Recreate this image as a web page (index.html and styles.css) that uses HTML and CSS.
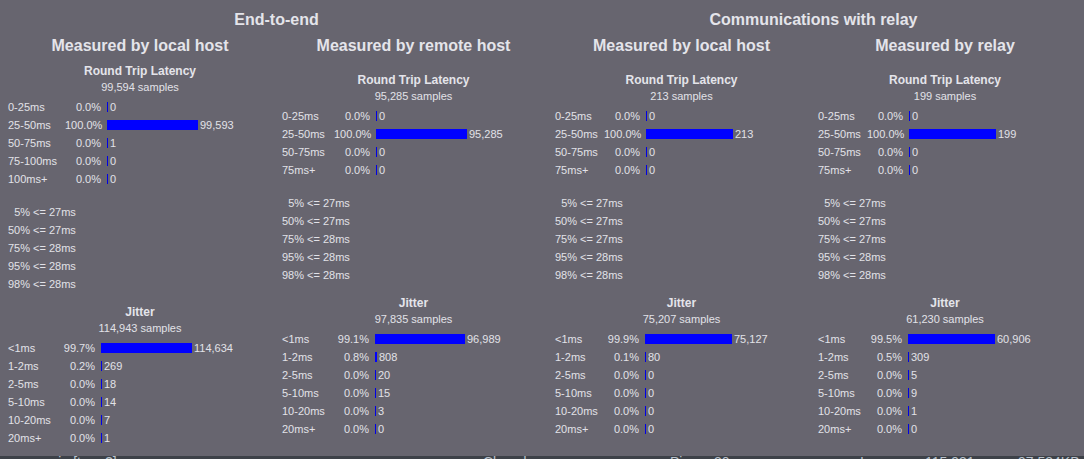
FILE: index.html
```html
<!DOCTYPE html>
<html>
<head>
<meta charset="utf-8">
<link rel="stylesheet" href="styles.css">
</head>
<body>
<div class="page">
  <div class="board">
    <h1 class="group g-left">End-to-end</h1>
    <h1 class="group g-right">Communications with relay</h1>

    <h2 class="coltitle">Measured by local host</h2>
    <h2 class="coltitle">Measured by remote host</h2>
    <h2 class="coltitle">Measured by local host</h2>
    <h2 class="coltitle">Measured by relay</h2>

    <!-- Column 1 -->
    <div class="colbody">
      <section class="sec">
        <h3 class="sec-title">Round Trip Latency</h3>
        <div class="samples">99,594 samples</div>
        <div class="hist lab57">
          <span class="lab">0-25ms</span><span class="pct">0.0%</span><span class="cell"><span class="bar thin" style="width:1px"></span><span class="val">0</span></span>
          <span class="lab">25-50ms</span><span class="pct">100.0%</span><span class="cell"><span class="bar" style="width:91px"></span><span class="val">99,593</span></span>
          <span class="lab">50-75ms</span><span class="pct">0.0%</span><span class="cell"><span class="bar thin" style="width:1px"></span><span class="val">1</span></span>
          <span class="lab">75-100ms</span><span class="pct">0.0%</span><span class="cell"><span class="bar thin" style="width:1px"></span><span class="val">0</span></span>
          <span class="lab">100ms+</span><span class="pct">0.0%</span><span class="cell"><span class="bar thin" style="width:1px"></span><span class="val">0</span></span>
        </div>
      </section>
      <div class="pctl">
        <span class="pp">5%</span><span class="pv">&lt;= 27ms</span>
        <span class="pp">50%</span><span class="pv">&lt;= 27ms</span>
        <span class="pp">75%</span><span class="pv">&lt;= 28ms</span>
        <span class="pp">95%</span><span class="pv">&lt;= 28ms</span>
        <span class="pp">98%</span><span class="pv">&lt;= 28ms</span>
      </div>
      <section class="sec jit">
        <h3 class="sec-title">Jitter</h3>
        <div class="samples">114,943 samples</div>
        <div class="hist lab51">
          <span class="lab">&lt;1ms</span><span class="pct">99.7%</span><span class="cell"><span class="bar" style="width:91px"></span><span class="val">114,634</span></span>
          <span class="lab">1-2ms</span><span class="pct">0.2%</span><span class="cell"><span class="bar thin" style="width:1px"></span><span class="val">269</span></span>
          <span class="lab">2-5ms</span><span class="pct">0.0%</span><span class="cell"><span class="bar thin" style="width:1px"></span><span class="val">18</span></span>
          <span class="lab">5-10ms</span><span class="pct">0.0%</span><span class="cell"><span class="bar thin" style="width:1px"></span><span class="val">14</span></span>
          <span class="lab">10-20ms</span><span class="pct">0.0%</span><span class="cell"><span class="bar thin" style="width:1px"></span><span class="val">7</span></span>
          <span class="lab">20ms+</span><span class="pct">0.0%</span><span class="cell"><span class="bar thin" style="width:1px"></span><span class="val">1</span></span>
        </div>
      </section>
    </div>

    <!-- Column 2 -->
    <div class="colbody">
      <section class="sec">
        <h3 class="sec-title">Round Trip Latency</h3>
        <div class="samples">95,285 samples</div>
        <div class="hist lab52">
          <span class="lab">0-25ms</span><span class="pct">0.0%</span><span class="cell"><span class="bar thin" style="width:1px"></span><span class="val">0</span></span>
          <span class="lab">25-50ms</span><span class="pct">100.0%</span><span class="cell"><span class="bar" style="width:91px"></span><span class="val">95,285</span></span>
          <span class="lab">50-75ms</span><span class="pct">0.0%</span><span class="cell"><span class="bar thin" style="width:1px"></span><span class="val">0</span></span>
          <span class="lab">75ms+</span><span class="pct">0.0%</span><span class="cell"><span class="bar thin" style="width:1px"></span><span class="val">0</span></span>
        </div>
      </section>
      <div class="pctl">
        <span class="pp">5%</span><span class="pv">&lt;= 27ms</span>
        <span class="pp">50%</span><span class="pv">&lt;= 27ms</span>
        <span class="pp">75%</span><span class="pv">&lt;= 28ms</span>
        <span class="pp">95%</span><span class="pv">&lt;= 28ms</span>
        <span class="pp">98%</span><span class="pv">&lt;= 28ms</span>
      </div>
      <section class="sec jit">
        <h3 class="sec-title">Jitter</h3>
        <div class="samples">97,835 samples</div>
        <div class="hist lab51">
          <span class="lab">&lt;1ms</span><span class="pct">99.1%</span><span class="cell"><span class="bar" style="width:90px"></span><span class="val">96,989</span></span>
          <span class="lab">1-2ms</span><span class="pct">0.8%</span><span class="cell"><span class="bar" style="width:2px"></span><span class="val">808</span></span>
          <span class="lab">2-5ms</span><span class="pct">0.0%</span><span class="cell"><span class="bar thin" style="width:1px"></span><span class="val">20</span></span>
          <span class="lab">5-10ms</span><span class="pct">0.0%</span><span class="cell"><span class="bar thin" style="width:1px"></span><span class="val">15</span></span>
          <span class="lab">10-20ms</span><span class="pct">0.0%</span><span class="cell"><span class="bar thin" style="width:1px"></span><span class="val">3</span></span>
          <span class="lab">20ms+</span><span class="pct">0.0%</span><span class="cell"><span class="bar thin" style="width:1px"></span><span class="val">0</span></span>
        </div>
      </section>
    </div>

    <!-- Column 3 -->
    <div class="colbody">
      <section class="sec">
        <h3 class="sec-title">Round Trip Latency</h3>
        <div class="samples">213 samples</div>
        <div class="hist lab49">
          <span class="lab">0-25ms</span><span class="pct">0.0%</span><span class="cell"><span class="bar thin" style="width:1px"></span><span class="val">0</span></span>
          <span class="lab">25-50ms</span><span class="pct">100.0%</span><span class="cell"><span class="bar" style="width:87px"></span><span class="val">213</span></span>
          <span class="lab">50-75ms</span><span class="pct">0.0%</span><span class="cell"><span class="bar thin" style="width:1px"></span><span class="val">0</span></span>
          <span class="lab">75ms+</span><span class="pct">0.0%</span><span class="cell"><span class="bar thin" style="width:1px"></span><span class="val">0</span></span>
        </div>
      </section>
      <div class="pctl">
        <span class="pp">5%</span><span class="pv">&lt;= 27ms</span>
        <span class="pp">50%</span><span class="pv">&lt;= 27ms</span>
        <span class="pp">75%</span><span class="pv">&lt;= 27ms</span>
        <span class="pp">95%</span><span class="pv">&lt;= 28ms</span>
        <span class="pp">98%</span><span class="pv">&lt;= 28ms</span>
      </div>
      <section class="sec jit">
        <h3 class="sec-title">Jitter</h3>
        <div class="samples">75,207 samples</div>
        <div class="hist lab48">
          <span class="lab">&lt;1ms</span><span class="pct">99.9%</span><span class="cell"><span class="bar" style="width:87px"></span><span class="val">75,127</span></span>
          <span class="lab">1-2ms</span><span class="pct">0.1%</span><span class="cell"><span class="bar thin" style="width:1px"></span><span class="val">80</span></span>
          <span class="lab">2-5ms</span><span class="pct">0.0%</span><span class="cell"><span class="bar thin" style="width:1px"></span><span class="val">0</span></span>
          <span class="lab">5-10ms</span><span class="pct">0.0%</span><span class="cell"><span class="bar thin" style="width:1px"></span><span class="val">0</span></span>
          <span class="lab">10-20ms</span><span class="pct">0.0%</span><span class="cell"><span class="bar thin" style="width:1px"></span><span class="val">0</span></span>
          <span class="lab">20ms+</span><span class="pct">0.0%</span><span class="cell"><span class="bar thin" style="width:1px"></span><span class="val">0</span></span>
        </div>
      </section>
    </div>

    <!-- Column 4 -->
    <div class="colbody">
      <section class="sec">
        <h3 class="sec-title">Round Trip Latency</h3>
        <div class="samples">199 samples</div>
        <div class="hist lab49">
          <span class="lab">0-25ms</span><span class="pct">0.0%</span><span class="cell"><span class="bar thin" style="width:1px"></span><span class="val">0</span></span>
          <span class="lab">25-50ms</span><span class="pct">100.0%</span><span class="cell"><span class="bar" style="width:87px"></span><span class="val">199</span></span>
          <span class="lab">50-75ms</span><span class="pct">0.0%</span><span class="cell"><span class="bar thin" style="width:1px"></span><span class="val">0</span></span>
          <span class="lab">75ms+</span><span class="pct">0.0%</span><span class="cell"><span class="bar thin" style="width:1px"></span><span class="val">0</span></span>
        </div>
      </section>
      <div class="pctl">
        <span class="pp">5%</span><span class="pv">&lt;= 27ms</span>
        <span class="pp">50%</span><span class="pv">&lt;= 27ms</span>
        <span class="pp">75%</span><span class="pv">&lt;= 27ms</span>
        <span class="pp">95%</span><span class="pv">&lt;= 28ms</span>
        <span class="pp">98%</span><span class="pv">&lt;= 28ms</span>
      </div>
      <section class="sec jit">
        <h3 class="sec-title">Jitter</h3>
        <div class="samples">61,230 samples</div>
        <div class="hist lab48">
          <span class="lab">&lt;1ms</span><span class="pct">99.5%</span><span class="cell"><span class="bar" style="width:87px"></span><span class="val">60,906</span></span>
          <span class="lab">1-2ms</span><span class="pct">0.5%</span><span class="cell"><span class="bar thin" style="width:1px"></span><span class="val">309</span></span>
          <span class="lab">2-5ms</span><span class="pct">0.0%</span><span class="cell"><span class="bar thin" style="width:1px"></span><span class="val">5</span></span>
          <span class="lab">5-10ms</span><span class="pct">0.0%</span><span class="cell"><span class="bar thin" style="width:1px"></span><span class="val">9</span></span>
          <span class="lab">10-20ms</span><span class="pct">0.0%</span><span class="cell"><span class="bar thin" style="width:1px"></span><span class="val">1</span></span>
          <span class="lab">20ms+</span><span class="pct">0.0%</span><span class="cell"><span class="bar thin" style="width:1px"></span><span class="val">0</span></span>
        </div>
      </section>
    </div>
  </div>
</div>
<footer class="status">
  <span class="st-msg">measure in [term?]</span>
  <span class="st-state">Closed</span>
  <span class="st-ping">Ping: ~30ms</span>
  <span class="st-in">In:</span>
  <span class="st-count">115,931</span>
  <span class="st-bytes">97,534KB</span>
</footer>
</body>
</html>
```
FILE: styles.css
```css
html, body {
  margin: 0;
  padding: 0;
}
body {
  background: #67656f;
  color: #e2e2e8;
  font-family: "Liberation Sans", Arial, sans-serif;
  overflow: hidden;
}
.page {
  padding: 8px 8px 9px 8px;
}
.board {
  display: grid;
  grid-template-columns: 264px 263px 253px 254px;
  column-gap: 10px;
}
.group {
  margin: 0;
  padding-top: 2px;
  margin-bottom: 6px;
  font-size: 16px;
  line-height: 20px;
  font-weight: bold;
  text-align: center;
  color: #e4e4ea;
}
.g-left { grid-column: 1 / 3; }
.g-right { grid-column: 3 / 5; }
.coltitle {
  margin: 0 0 8px 0;
  font-size: 16px;
  line-height: 20px;
  font-weight: bold;
  text-align: center;
  color: #e4e4ea;
}
.colbody {
  align-self: center;
  display: flex;
  flex-direction: column;
}
.sec-title {
  margin: 0;
  font-size: 12px;
  line-height: 15px;
  font-weight: bold;
  text-align: center;
  color: #e4e4ea;
}
.samples {
  font-size: 11px;
  line-height: 16px;
  text-align: center;
}
.hist {
  margin-top: 3px;
  display: grid;
  grid-template-columns: 57px 42px 1fr;
  grid-auto-rows: 18px;
  align-items: center;
  font-size: 11px;
  line-height: 18px;
}
.hist.lab57 { grid-template-columns: 57px 42px 1fr; }
.hist.lab52 { grid-template-columns: 52px 42px 1fr; }
.hist.lab51 { grid-template-columns: 51px 42px 1fr; }
.hist.lab49 { grid-template-columns: 49px 42px 1fr; }
.hist.lab48 { grid-template-columns: 48px 42px 1fr; }
.lab {
  white-space: nowrap;
}
.pct {
  padding-right: 6px;
  text-align: right;
  white-space: nowrap;
}
.cell {
  display: flex;
  align-items: center;
  height: 18px;
}
.bar {
  display: block;
  height: 10px;
  background: #0000ff;
  flex: none;
}
.bar.thin {
  background: #0000e6;
}
.val {
  margin-left: 2px;
  white-space: nowrap;
}
.pctl {
  margin-top: 15px;
  display: grid;
  grid-template-columns: max-content 1fr;
  grid-auto-rows: 18px;
  font-size: 11px;
  line-height: 18px;
}
.pp {
  text-align: right;
}
.pv {
  padding-left: 3px;
}
.jit {
  margin-top: 12px;
}
.status {
  background: #3d4148;
  height: 24px;
  display: grid;
  grid-template-columns: 483px 187px 190px 65px 93px 1fr;
  font-size: 14px;
  line-height: 13px;
  color: #b9c1cc;
  white-space: nowrap;
}
```
